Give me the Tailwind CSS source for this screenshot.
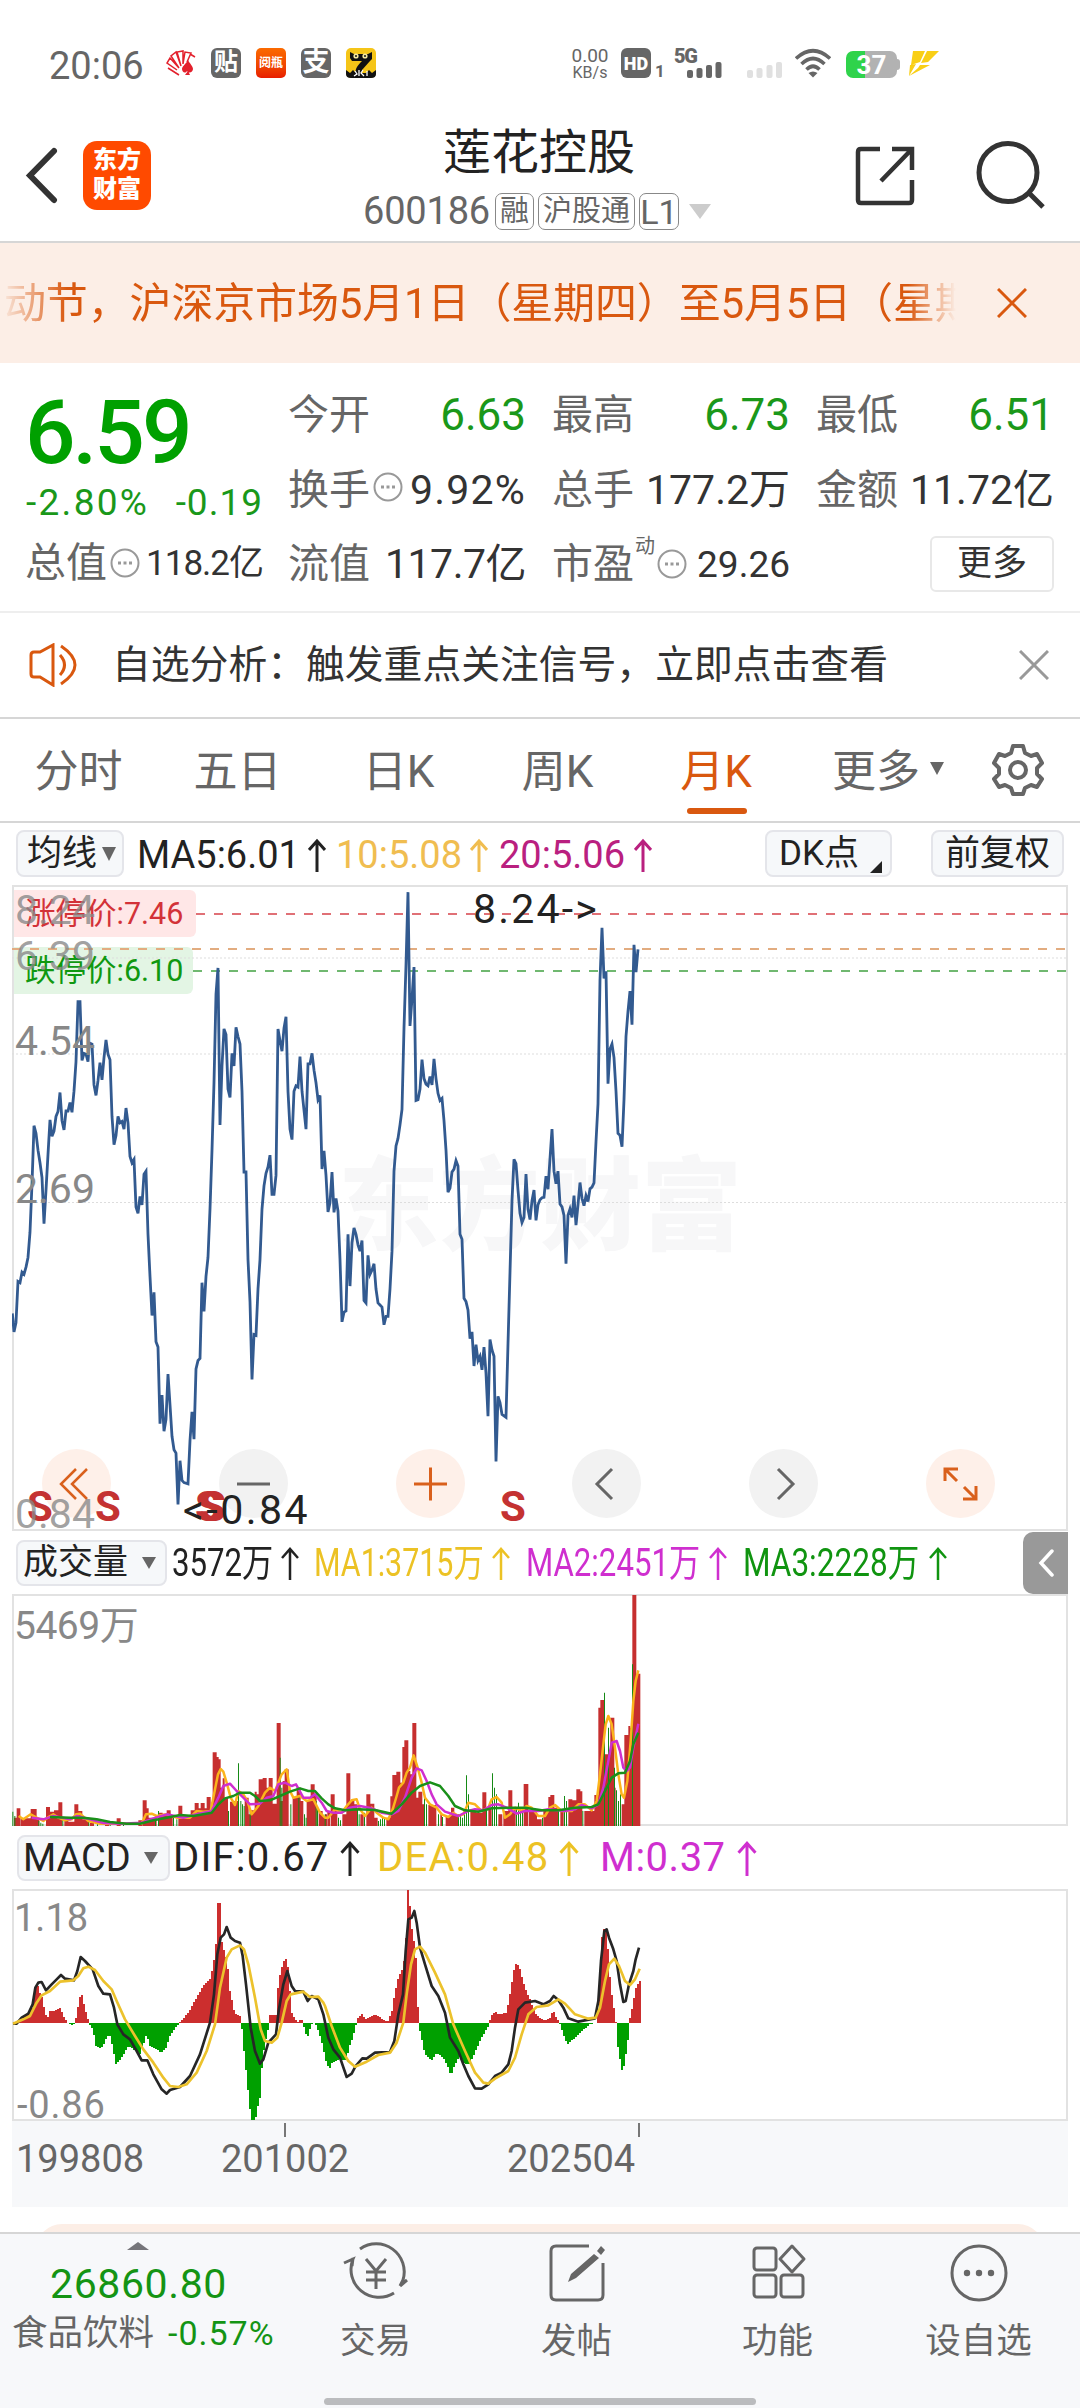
<!DOCTYPE html>
<html lang="zh">
<head>
    <meta charset="UTF-8">
    <title>莲花控股 600186</title>
    <script src="https://cdn.jsdelivr.net/npm/@tailwindcss/browser@4"></script>
</head>
<body class="w-[1080px] h-[2408px] overflow-hidden bg-white text-[#222] font-[Roboto,'Noto_Sans_CJK_SC',sans-serif] whitespace-nowrap leading-none">
    <!-- Status bar -->
    <div class="h-[110px] pt-[48px] pl-[49px] flex items-start text-[#666]">
        <div class="w-[117px] text-[38px] leading-[36px]">20:06</div>
        <div class="flex gap-[15px]">
            <svg class="w-[30px] h-[30px]" viewBox="0 0 30 30" fill="none" stroke="#e3202c" stroke-width="1.5">
                <path d="M13 27L2 20M11 22L1 15l3-5 9 10M13 20L5 8l5-4 5 14M15 18L11 4l6-1v13M17 16l2-12 6 1-4 9M24 6l5 3"/>
                <path d="M22 12c-2 4-6 6-6 9s3 5 5 2c2 3 6 1 6-2s-3-5-5-9zM19 27h5l-2-4z" fill="#e3202c" stroke="none"/>
            </svg>
            <div class="size-[30px] rounded-[6px] bg-[#666] text-white text-[24px] leading-[29px] font-bold text-center">贴</div>
            <div class="size-[30px] rounded-[5px] bg-linear-to-b from-[#fb6a00] to-[#e81c00] text-white text-[12px] leading-[30px] font-bold text-center">阅瓶</div>
            <div class="size-[30px] rounded-[6px] bg-[#666] text-white text-[27px] leading-[29px] font-bold text-center">支</div>
            <svg class="w-[30px] h-[30px]" viewBox="0 0 30 30">
                <rect width="30" height="30" rx="5" fill="#f5c518"/>
                <path d="M4 4l4 2h14l4-2v7l-2 2-8 9v6H9c0-8 3-11 7-15H6l-2-3z" fill="#111"/>
                <path d="M0 22l4 3 3-3 3 3h10l3-3 3 3 4-3v4q0 4-5 4H5q-5 0-5-4z" fill="#111"/>
                <circle cx="10" cy="8" r="2.6" fill="#f6e9a0"/><circle cx="19" cy="8" r="2.6" fill="#f6e9a0"/>
                <circle cx="10" cy="8" r="1" fill="#111"/><circle cx="19" cy="8" r="1" fill="#111"/>
                <path d="M9 23l2 3-3 2M13 22v6M17 22l-2 3 3 3M21 23v5" stroke="#fff" stroke-width="1.3" fill="none"/>
            </svg>
        </div>
        <div class="ml-[194px] w-[40px] text-center">
            <div class="text-[19px] leading-[16px]">0.00</div>
            <div class="text-[16px] leading-[15px] mt-[1px]">KB/s</div>
        </div>
        <div class="ml-[11px] size-[30px] rounded-[6px] bg-[#666] text-white text-[18px] leading-[31px] font-black text-center">HD</div>
        <div class="w-[24px] pl-[4px] pt-[15px] text-[17px] leading-[17px] font-bold">1</div>
        <svg class="w-[48px] h-[30px] overflow-visible" viewBox="0 0 48 30" fill="#666">
            <text x="-1" y="14.5" font-size="20" font-weight="900" textLength="24">5G</text>
            <rect x="12" y="22" width="6" height="8" rx="2"/><rect x="21.500" y="20" width="6" height="10" rx="2"/><rect x="31" y="17" width="6" height="13" rx="2"/><rect x="40.500" y="14" width="6" height="16" rx="2"/>
        </svg>
        <svg class="ml-[24px] w-[36px] h-[30px]" viewBox="0 0 36 30" fill="#e0e0e0">
            <rect x="0" y="22" width="6" height="8" rx="2"/><rect x="9.500" y="20" width="6" height="10" rx="2"/><rect x="19.500" y="17" width="6" height="13" rx="2"/><rect x="29" y="14" width="6" height="16" rx="2"/>
        </svg>
        <svg class="ml-[12px] w-[36px] h-[30px]" viewBox="0 0 36 30" fill="none" stroke="#666" stroke-width="3.600">
            <path d="M1 10.500Q18-5 35 10.500M6.500 16Q18 5 29.500 16M11.500 21.500Q18 15 24.500 21.500"/>
            <path d="M18 29.500l-4.500-4.500q4.500-3 9 0z" fill="#666" stroke="none"/>
        </svg>
        <div class="ml-[15px] mt-[3px] w-[51px] h-[27px] rounded-[7px] bg-linear-to-r from-[#2fd34b] from-37% to-[#b2b2b2] to-37% text-white text-[26px] leading-[28px] font-bold text-center">37</div>
        <div class="mt-[11px] w-[3px] h-[11px] rounded-r bg-[#b2b2b2]"></div>
        <svg class="ml-[8px] mt-[3px] w-[32px] h-[26px]" viewBox="0 0 32 26" fill="#f9cf16">
            <path d="M5 0h12l-5 11-9 3zM19 0h12L20 11l-7 1zM2 14l6-1-7 12zM12 14h10L1 25l9-8z"/>
        </svg>
    </div>

    <!-- Header -->
    <div class="h-[133px] flex border-b-2 border-[#d6d6d6] text-[#333]">
        <svg class="ml-[24px] mt-[36px] w-[36px] h-[58px]" viewBox="0 0 36 58" fill="none" stroke="#333" stroke-width="6" stroke-linecap="round"><path d="M30 5L6 29.500 30 54"/></svg>
        <div class="ml-[23px] mt-[31px] w-[68px] h-[69px] rounded-[14px] bg-[#ff4a00] text-white text-[24px] leading-[29px] font-black text-center pt-[5px]">东方<br>财富</div>
        <div class="ml-[212px] w-[350px] flex flex-col">
            <div class="mt-[17px] ml-[80px] text-[48px] leading-[52px] text-[#222]">莲花控股</div>
            <div class="mt-[13px] flex items-center gap-[4px] text-[#666]">
                <div class="w-[128px] text-[38px] tracking-[-0.200px]">600186</div>
                <div class="h-[37px] px-[4px] border rounded-[7px] border-[#888] text-[29px] leading-[35px]">融</div>
                <div class="h-[37px] px-[4px] border rounded-[7px] border-[#888] text-[29px] leading-[35px]">沪股通</div>
                <div class="w-[40px] h-[37px] border rounded-[7px] border-[#888] text-[34px] leading-[37px] text-center">L1</div>
                <svg class="ml-[6px] w-[22px] h-[15px]" viewBox="0 0 22 15" fill="#ccc"><path d="M0 0h22L11 15z"/></svg>
            </div>
        </div>
        <svg class="ml-[142px] mt-[36px] w-[60px] h-[60px]" viewBox="0 0 60 60" fill="none" stroke="#333" stroke-width="4.500">
            <path d="M25 3H6Q3 3 3 6V54Q3 57 6 57H54Q57 57 57 54V34M37 3H57V24M57 3L26 35"/>
        </svg>
        <svg class="ml-[59px] mt-[28px] w-[72px] h-[74px]" viewBox="0 0 72 74" fill="none" stroke="#333" stroke-width="5">
            <circle cx="34" cy="34.500" r="29"/><path d="M55 55L69 69"/>
        </svg>
    </div>

    <!-- Notice -->
    <div class="h-[120px] flex items-center bg-[#fceee6] text-[#d9580f]">
        <div class="w-[956px] pl-[4px] pt-[2px] overflow-hidden text-[42px] leading-[60px] tracking-[-0.150px] mask-r-from-95% mask-l-from-93%">动节，沪深京市场5月1日（星期四）至5月5日（星期</div>
        <svg class="ml-[41px] w-[30px] h-[30px]" viewBox="0 0 30 30" stroke="#d9580f" stroke-width="3"><path d="M1 1L29 29M29 1L1 29"/></svg>
    </div>

    <!-- Quote -->
    <div class="h-[250px] border-b-2 border-[#eee] pl-[25px] pr-[26px] pt-[26px] text-[41px] text-[#333] flex">
        <div class="w-[238px]">
            <div class="h-[78px] pt-[4px] text-[89px] leading-[80px] font-medium tracking-[-3px] text-[#00a000]">6.59</div>
            <div class="h-[70px] pt-[14px] flex justify-between text-[37px] leading-[44px] text-[#1a981a]"><span class="pl-[1px] tracking-[2.300px]">-2.80%</span><span class="tracking-[1px]">-0.19</span></div>
            <div class="h-[52px] flex items-center text-[35px]">
                <span class="text-[41px] text-[#666]">总值</span>
                <svg class="ml-[3px] w-[30px] h-[30px]" viewBox="0 0 30 30" fill="none" stroke="#999" stroke-width="2"><circle cx="15" cy="15" r="13.500"/><path d="M8 15h3M13.500 15h3M19 15h3" stroke-width="3"/></svg>
                <span class="ml-auto tracking-[-1px]">118.2亿</span>
            </div>
        </div>
        <div class="ml-[25px] w-[238px]">
            <div class="h-[52px] flex items-center justify-between"><span class="text-[#666]">今开</span><span class="text-[44px] text-[#1a981a]">6.63</span></div>
            <div class="mt-[23px] h-[52px] flex items-center text-[41px]"><span class="text-[#666]">换手</span>
                <svg class="ml-[3px] -mt-[6px] w-[30px] h-[30px]" viewBox="0 0 30 30" fill="none" stroke="#999" stroke-width="2"><circle cx="15" cy="15" r="13.500"/><path d="M8 15h3M13.500 15h3M19 15h3" stroke-width="3"/></svg>
                <span class="ml-auto tracking-[1.200px]">9.92%</span></div>
            <div class="mt-[22px] h-[52px] flex items-center justify-between"><span class="text-[#666]">流值</span><span class="tracking-[-0.500px]">117.7亿</span></div>
        </div>
        <div class="ml-[26px] w-[238px]">
            <div class="h-[52px] flex items-center justify-between"><span class="text-[#666]">最高</span><span class="text-[44px] text-[#1a981a]">6.73</span></div>
            <div class="mt-[23px] h-[52px] flex items-center justify-between"><span class="text-[#666]">总手</span><span>177.2万</span></div>
            <div class="mt-[22px] h-[52px] flex items-center"><span class="text-[#666]">市盈</span>
                <span class="-mt-[36px] ml-[1px] text-[20px] text-[#666]">动</span>
                <svg class="ml-[2px] w-[30px] h-[30px]" viewBox="0 0 30 30" fill="none" stroke="#999" stroke-width="2"><circle cx="15" cy="15" r="13.500"/><path d="M8 15h3M13.500 15h3M19 15h3" stroke-width="3"/></svg>
                <span class="ml-auto text-[37px]">29.26</span></div>
        </div>
        <div class="ml-[26px] w-[238px]">
            <div class="h-[52px] flex items-center justify-between"><span class="text-[#666]">最低</span><span class="text-[44px] text-[#1a981a]">6.51</span></div>
            <div class="mt-[23px] h-[52px] flex items-center justify-between"><span class="text-[#666]">金额</span><span>11.72亿</span></div>
            <div class="mt-[20px] ml-auto w-[124px] h-[56px] border-2 border-[#e8e8e8] rounded-[6px] text-[35px] leading-[52px] text-center">更多</div>
        </div>
    </div>

    <!-- Analysis tip -->
    <div class="h-[106px] flex items-center border-b-2 border-[#d6d6d6]">
        <svg class="ml-[29px] w-[52px] h-[44px]" viewBox="0 0 52 44" fill="none" stroke="#d9580f" stroke-width="3">
            <path d="M24 2v40L11 34H5Q2 34 2 31V12Q2 9 5 9h6zM31 12q9 10 0 20M32 3q28 19 0 38"/>
        </svg>
        <div class="ml-[31px] w-[907px] text-[38.800px] leading-[60px] text-[#333]">自选分析：触发重点关注信号，立即点击查看</div>
        <svg class="w-[30px] h-[30px]" viewBox="0 0 30 30" stroke="#999" stroke-width="3"><path d="M1 1L29 29M29 1L1 29"/></svg>
    </div>

    <!-- Period tabs -->
    <div class="h-[104px] flex border-b-2 border-[#d6d6d6] text-[44px] leading-[106px] text-[#666]">
        <div class="w-[157px] text-center">分时</div>
        <div class="w-[161px] text-center">五日</div>
        <div class="w-[161px] text-center">日K</div>
        <div class="w-[157px] text-center">周K</div>
        <div class="w-[160px] text-center text-[#d9580f] relative">月K<div class="absolute left-[51px] bottom-[7px] w-[60px] h-[6px] rounded-full bg-[#d9580f]"></div></div>
        <div class="ml-[36px] w-[98px]">更多</div>
        <svg class="mt-[43px] w-[14px] h-[13px]" viewBox="0 0 14 13" fill="#666"><path d="M0 0h14L7 13z"/></svg>
        <svg class="ml-[48px] mt-[25px] w-[52px] h-[52px]" viewBox="0 0 52 52" fill="none" stroke="#666" stroke-width="4" stroke-linejoin="round">
            <path d="M21 2h10l2 7 6 3 6-2 5 9-5 5v6l5 5-5 8-6-2-6 3-2 6H21l-2-6-6-3-6 2-5-8 5-5v-6l-5-5 5-9 6 2 6-3z"/><circle cx="26" cy="26" r="8"/>
        </svg>
    </div>

    <!-- Moving averages -->
    <div class="h-[62px] flex items-start pt-[7px] pl-[16px] text-[38px] leading-[50px]">
        <div class="w-[108px] h-[47px] mr-[13px] flex items-center gap-[5px] pl-[9px] border-2 border-[#e4e5ea] rounded-[8px] bg-[#f6f8fa] text-[35px]">均线<svg class="w-[14px] h-[14px]" viewBox="0 0 14 14" fill="#666"><path d="M0 0h14L7 14z"/></svg></div>
        <div class="w-[199px] flex items-center">MA5:6.01<svg class="ml-[8px] w-[18px] h-[34px]" viewBox="0 0 18 34" fill="none" stroke="currentColor" stroke-width="3"><path d="M9 34V3M1 12L9 3l8 9"/></svg></div>
        <div class="w-[163px] flex items-center text-[#f0bd50]">10:5.08<svg class="ml-[8px] w-[18px] h-[34px]" viewBox="0 0 18 34" fill="none" stroke="currentColor" stroke-width="3"><path d="M9 34V3M1 12L9 3l8 9"/></svg></div>
        <div class="w-[266px] flex items-center text-[#b9207f]">20:5.06<svg class="ml-[9px] w-[18px] h-[34px]" viewBox="0 0 18 34" fill="none" stroke="currentColor" stroke-width="3"><path d="M9 34V3M1 12L9 3l8 9"/></svg></div>
        <div class="w-[127px] h-[47px] flex items-center pl-[12px] border-2 border-[#e4e5ea] rounded-[8px] bg-[#f6f8fa] text-[35px]">DK点<svg class="ml-[11px] mt-[26px] w-[12px] h-[12px]" viewBox="0 0 12 12"><path d="M12 0v12H0z" fill="#222"/></svg></div>
        <div class="ml-[39px] w-[133px] h-[47px] border-2 border-[#e4e5ea] rounded-[8px] bg-[#f6f8fa] text-[35px] leading-[43px] text-center">前复权</div>
    </div>

    <!-- Price chart -->
    <div class="relative mx-[12px] h-[646px] text-[41px] leading-[40px]">
        <div class="absolute left-[326px] top-[268px] text-[101px] leading-[110px] font-black text-[#f7f7f8]">东方财富</div>
        <div class="absolute left-0 top-[5px] w-[184px] h-[47px] rounded-r-[6px] bg-[#ffe7e7]"></div>
        <div class="absolute left-0 top-[62px] w-[181px] h-[47px] rounded-r-[6px] bg-[#e3f5e4]"></div>
        <svg class="absolute left-0 top-0 w-[1056px] h-[646px]" viewBox="0 0 1056 646" fill="none">
            <rect x="1" y="1" width="1054" height="644" stroke="#e2e2e2" stroke-width="2"/>
            <path d="M0 73H1056M0 169H1056M0 317.500H1056" stroke="#ddd" stroke-dasharray="2 2"/>
            <path d="M184 29H1056" stroke="#e07076" stroke-width="2" stroke-dasharray="9 9"/>
            <path d="M0 64H1056" stroke="#e2ac80" stroke-width="2" stroke-dasharray="9 9"/>
            <path d="M181 86H1056" stroke="#70b870" stroke-width="2" stroke-dasharray="9 9"/>
        </svg>
        <svg class="absolute left-0 top-0 w-[1056px] h-[646px]" viewBox="36 10 3168 1535" preserveAspectRatio="none">
            <polyline id="price" fill="none" stroke="#325a90" stroke-width="2.800" vector-effect="non-scaling-stroke"/>
        </svg>
        <div class="absolute left-[13px] top-[9px] text-[30.500px] text-[#d33238]">涨停价:7.46</div>
        <div class="absolute left-[13px] top-[66px] text-[30.500px] text-[#109810]">跌停价:6.10</div>
        <div class="absolute left-[3px] top-[5px] text-[#888]/80">8.24</div>
        <div class="absolute left-[3px] top-[51px] text-[#888]/80">6.39</div>
        <div class="absolute left-[3px] top-[136px] text-[#888]">4.54</div>
        <div class="absolute left-[3px] top-[284px] text-[#888]">2.69</div>
        <div class="absolute left-[461px] top-[4px] tracking-[2.200px]">8.24-&gt;</div>
        <!-- Chart tools -->
        <div class="absolute left-[30px] top-[564px] flex gap-[107.800px]">
            <svg class="w-[69px] h-[69px]" viewBox="0 0 69 69" fill="none" stroke="#d9601c" stroke-width="2.500"><circle cx="34.500" cy="34.500" r="34.500" fill="#fef0e9" stroke="none"/><path d="M34 20L19 35l15 15M45 20L30 35l15 15"/></svg>
            <svg class="w-[69px] h-[69px]" viewBox="0 0 69 69" fill="none" stroke="#666" stroke-width="3"><circle cx="34.500" cy="34.500" r="34.500" fill="#f2f2f2" stroke="none"/><path d="M18 35h33"/></svg>
            <svg class="w-[69px] h-[69px]" viewBox="0 0 69 69" fill="none" stroke="#d9601c" stroke-width="3"><circle cx="34.500" cy="34.500" r="34.500" fill="#fef0e9" stroke="none"/><path d="M18 35h33M34.500 18.500v33"/></svg>
            <svg class="w-[69px] h-[69px]" viewBox="0 0 69 69" fill="none" stroke="#666" stroke-width="3"><circle cx="34.500" cy="34.500" r="34.500" fill="#f2f2f2" stroke="none"/><path d="M40 20L25 35l15 15"/></svg>
            <svg class="w-[69px] h-[69px]" viewBox="0 0 69 69" fill="none" stroke="#666" stroke-width="3"><circle cx="34.500" cy="34.500" r="34.500" fill="#f2f2f2" stroke="none"/><path d="M29 20L44 35 29 50"/></svg>
            <svg class="w-[69px] h-[69px]" viewBox="0 0 69 69" fill="none" stroke="#d9601c" stroke-width="3"><circle cx="34.500" cy="34.500" r="34.500" fill="#fef0e9" stroke="none"/><path d="M19 32V20h13M19 20l12 12M50 37v13H37M50 50L38 38"/></svg>
        </div>
        <div class="absolute left-[15px] top-[602px] text-[42px] font-bold text-[#c43232]">S</div>
        <div class="absolute left-[83px] top-[602px] text-[42px] font-bold text-[#c43232]">S</div>
        <div class="absolute left-[183px] top-[602px] text-[42px] font-bold text-[#c43232]">S</div>
        <div class="absolute left-[188px] top-[602px] text-[42px] font-bold text-[#c43232]">S</div>
        <div class="absolute left-[488px] top-[602px] text-[42px] font-bold text-[#c43232]">S</div>
        <div class="absolute left-[3px] top-[609px] text-[#888]/80">0.84</div>
        <div class="absolute left-[171px] top-[605px] tracking-[2.500px]">&lt;-0.84</div>
    </div>

    <div class="h-[63px] flex items-start pl-[16px] pt-[9px] text-[38px] leading-[46px]">
        <div class="w-[151px] h-[46px] mr-[5px] flex items-center gap-[14px] pl-[5px] border-2 border-[#e4e5ea] rounded-[8px] bg-[#f6f8fa] text-[35px]">成交量<svg class="w-[14px] h-[12px]" viewBox="0 0 14 12" fill="#666"><path d="M0 0h14L7 12z"/></svg></div>
        <div class="w-[142px] flex items-center"><span class="w-[109px]"><span class="inline-block origin-left scale-x-82">3572万</span></span><svg class="w-[18px] h-[34px]" viewBox="0 0 18 34" fill="none" stroke="currentColor" stroke-width="2.500"><path d="M9 34V3M1 12L9 3l8 9"/></svg></div>
        <div class="w-[212px] flex items-center text-[#ecc224]"><span class="w-[178px]"><span class="inline-block origin-left scale-x-80">MA1:3715万</span></span><svg class="w-[18px] h-[34px]" viewBox="0 0 18 34" fill="none" stroke="currentColor" stroke-width="2.500"><path d="M9 34V3M1 12L9 3l8 9"/></svg></div>
        <div class="w-[217px] flex items-center text-[#cf2fcf]"><span class="w-[183px]"><span class="inline-block origin-left scale-x-82">MA2:2451万</span></span><svg class="w-[18px] h-[34px]" viewBox="0 0 18 34" fill="none" stroke="currentColor" stroke-width="2.500"><path d="M9 34V3M1 12L9 3l8 9"/></svg></div>
        <div class="w-[280px] flex items-center text-[#109410]"><span class="w-[186px]"><span class="inline-block origin-left scale-x-83">MA3:2228万</span></span><svg class="w-[18px] h-[34px]" viewBox="0 0 18 34" fill="none" stroke="currentColor" stroke-width="2.500"><path d="M9 34V3M1 12L9 3l8 9"/></svg></div>
        <div class="-mt-[8px] w-[45px] h-[62px] rounded-l-[10px] bg-[#999] flex items-center justify-center"><svg class="w-[16px] h-[28px]" viewBox="0 0 16 28" fill="none" stroke="#fff" stroke-width="3.500" stroke-linecap="round"><path d="M14 2L3 14l11 12"/></svg></div>
    </div>
    <div class="relative mx-[12px] h-[232px] border-2 border-[#e2e2e2] text-[39px] leading-[40px] text-[#888]">
        <div class="absolute left-0 top-[10px] tracking-[-0.500px]">5469万</div>
        <svg class="absolute -left-[2px] -top-[1px] w-[1056px] h-[231px]" viewBox="6 -18 3168 693" fill="none" stroke-width="7.500" stroke-linejoin="round">
            <path id="vol-up" fill="#c62f2f"/>
            <path id="vol-down" fill="#168a16"/>
            <polyline id="vol-ma1" stroke="#fbb41c"/>
            <polyline id="vol-ma2" stroke="#cf2fcf"/>
            <polyline id="vol-ma3" stroke="#1a901a"/>
        </svg>
    </div>

    <!-- MACD -->
    <div class="h-[63px] flex items-start pl-[17px] pt-[9px] text-[40px] leading-[46px]">
        <div class="w-[153px] h-[46px] mr-[3px] flex items-center gap-[13px] pl-[4px] border-2 border-[#e4e5ea] rounded-[8px] bg-[#f6f8fa] text-[38px]">MACD<svg class="w-[14px] h-[12px]" viewBox="0 0 14 12" fill="#666"><path d="M0 0h14L7 12z"/></svg></div>
        <div class="w-[204px] flex items-center tracking-[1.200px]">DIF:0.67<svg class="ml-[10px] w-[20px] h-[36px]" viewBox="0 0 18 34" fill="none" stroke="currentColor" stroke-width="2.800"><path d="M9 34V3M1 12L9 3l8 9"/></svg></div>
        <div class="w-[223px] flex items-center tracking-[1.200px] text-[#ecc224]">DEA:0.48<svg class="ml-[10px] w-[20px] h-[36px]" viewBox="0 0 18 34" fill="none" stroke="currentColor" stroke-width="2.800"><path d="M9 34V3M1 12L9 3l8 9"/></svg></div>
        <div class="flex items-center tracking-[0.500px] text-[#cf2fcf]">M:0.37<svg class="ml-[11px] w-[20px] h-[36px]" viewBox="0 0 18 34" fill="none" stroke="currentColor" stroke-width="2.800"><path d="M9 34V3M1 12L9 3l8 9"/></svg></div>
    </div>
    <div class="relative mx-[12px] h-[232px] border-2 border-[#e2e2e2] text-[38px] leading-[40px] text-[#888]">
        <div class="absolute left-0 top-[7px]">1.18</div>
        <div class="absolute left-[3px] top-[194px] tracking-[0.800px]">-0.86</div>
        <svg class="absolute -left-[2px] -top-[1px] w-[1056px] h-[231px]" viewBox="6 867 3168 693" fill="none" stroke-width="8" stroke-linejoin="round">
            <path id="macd-up" fill="#cc2e2e" shape-rendering="crispEdges"/>
            <path id="macd-down" fill="#00a000" shape-rendering="crispEdges"/>
            <polyline id="dif" stroke="#262626"/>
            <polyline id="dea" stroke="#ecc22c"/>
        </svg>
    </div>

    <!-- Time axis -->
    <div class="relative mx-[12px] h-[86px] bg-[#f7f8fa] text-[38px] leading-[40px] text-[#666] flex items-start pt-[18px]">
        <div class="absolute left-[272px] top-[2px] w-[2px] h-[14px] bg-[#777]"></div>
        <div class="absolute left-[626px] top-[2px] w-[2px] h-[14px] bg-[#777]"></div>
        <div class="w-[205px] pl-[4px]">199808</div>
        <div class="w-[286px] pl-[4px]">201002</div>
        <div class="pl-[4px]">202504</div>
    </div>
    <div class="h-[25px] pt-[17px] px-[36px] overflow-hidden"><div class="h-[60px] rounded-[26px] bg-[#fceee6]"></div></div>

    <!-- Bottom bar -->
    <div class="relative h-[176px] border-t-2 border-[#d6d6d6] bg-[#f7f8fa] flex text-[35.500px] text-[#666]">
        <div class="w-[275px] pt-[8px]">
            <svg class="ml-[127px] w-[22px] h-[8px]" viewBox="0 0 22 8" fill="#75757a"><path d="M0 8L11 0l11 8z"/></svg>
            <div class="mt-[12px] w-[277px] text-center text-[41px] leading-[44px] tracking-[0.600px] text-[#149414]">26860.80</div>
            <div class="mt-[2px] pl-[12px] flex items-center text-[35.500px] leading-[50px]">食品饮料<span class="ml-[14px] text-[34px] tracking-[1px] text-[#149414]">-0.57%</span></div>
        </div>
        <div class="w-[201px] flex flex-col items-center pt-[8px]">
            <svg class="w-[66px] h-[60px]" viewBox="0 0 66 60" fill="none" stroke="#666" stroke-width="3">
                <path d="M17 7A28 28 0 0 1 60 38L57 44M51 51A28 28 0 0 1 10 17L1 21M10 16l-1 8M57 44l7-6"/>
                <path d="M23 17l10 12 10-12M33 29v18M23 30h20M23 38h20"/>
            </svg>
            <div class="mt-[22px]">交易</div>
        </div>
        <div class="w-[201px] flex flex-col items-center pt-[8px]">
            <svg class="w-[60px] h-[60px]" viewBox="0 0 60 60" fill="none" stroke="#666" stroke-width="3">
                <path d="M42 4H9Q4 4 4 9v44q0 5 5 5h42q5 0 5-5V21"/><path d="M21 40l3-8 23-20 5 4-23 20zM50 9l4-5 4 4-4 5z" fill="#666" stroke="none"/>
            </svg>
            <div class="mt-[22px]">发帖</div>
        </div>
        <div class="w-[201px] flex flex-col items-center pt-[8px]">
            <svg class="w-[60px] h-[60px]" viewBox="0 0 60 60" fill="none" stroke="#666" stroke-width="3">
                <rect x="6" y="6" width="22" height="22" rx="3"/><rect x="6" y="33" width="22" height="22" rx="3"/><rect x="33" y="33" width="22" height="22" rx="3"/><path d="M44 4l12 13-12 13-12-13z" stroke-linejoin="round"/>
            </svg>
            <div class="mt-[22px]">功能</div>
        </div>
        <div class="w-[201px] flex flex-col items-center pt-[8px]">
            <svg class="w-[60px] h-[60px]" viewBox="0 0 60 60" fill="none" stroke="#666" stroke-width="3">
                <circle cx="30" cy="31" r="27"/><g fill="#666" stroke="none"><circle cx="18" cy="31" r="3.200"/><circle cx="30" cy="31" r="3.200"/><circle cx="42" cy="31" r="3.200"/></g>
            </svg>
            <div class="mt-[22px]">设自选</div>
        </div>
        <div class="absolute left-[324px] bottom-[3px] w-[432px] h-[7px] rounded-full bg-[#bbbcbe]"></div>
    </div>

    <script>
        // Each series is kept in two halves; the second half is shifted right by `dx`.
        function parse(text) {
            return text.trim().split(/\s+/).map(p => p.split(',').map(Number));
        }

        function join(first, second, dx) {
            return parse(first).concat(parse(second).map(p => [p[0] + dx, ...p.slice(1)]));
        }

        function drawLine(id, points) {
            document.getElementById(id).setAttribute('points', points.map(p => p.join(',')).join(' '));
        }

        function valueAt(points, x) {
            for (let i = 1; i < points.length; i++) {
                const [x0, y0] = points[i - 1];
                const [x1, y1] = points[i];
                if (x <= x1) return y0 + (y1 - y0) * (x - x0) / (x1 - x0);
            }
            return points[points.length - 1][1];
        }

        // Price
        drawLine('price', join(
            `37,1028 42,1072 48,1050 54,952 60,955 66,930 72,935 78,918 84,895 90,835 96,720 102,582 108,600 114,640 120,670 126,705 132,815 138,735 144,650 150,568 156,607 162,595 168,560 174,548 180,503 186,570 192,592 198,547 204,547 210,527 216,550 222,500 228,430 234,287 240,287 246,427 252,410 258,412 264,430 268,385 276,388 282,485 288,510 294,475 300,432 306,473 312,420 318,378 324,412 330,425 336,560 342,627 348,605 354,560 360,575 366,572 372,590 378,540 384,575 390,655 396,670 402,662 408,775 414,790 420,750 426,770 432,697 438,690 444,840 450,940 456,1033 462,978 468,1095 474,1108 480,1290 486,1222 492,1308 498,1280 504,1172 510,1245 516,1320 522,1352 528,1360 534,1482 540,1378 546,1425 552,1430 564,1433 570,1330 576,1262 582,1327 588,1160 594,1140 600,1135 606,955 612,1023 618,940 624,895 630,780 636,640 642,480 648,270 654,207 660,580 666,440 672,352 678,365 684,495 690,515 696,410 702,440 708,348 714,370 720,388 726,500 732,692 738,692 744,900 750,1000 756,1185 762,1078 768,1080 774,970 780,900 786,780 792,725 798,695 804,680 810,652 816,745 822,745 828,700 834,352 840,380 846,405 852,350 858,323 864,500 870,590 876,615 882,500 888,487 894,490 900,418 906,500 912,545 918,590 924,435 930,435 936,410 942,450 948,480 954,520 960,510 966,685 972,642 978,700 984,787`,
            `0,765 6,692 12,788 18,755 24,785 30,900 36,1048 42,1025 48,1022 54,840 60,963 66,860 72,825 78,840 84,865 90,880 96,855 102,997 108,1003 114,890 120,935 126,925 132,910 138,970 144,1003 150,1008 156,1013 162,1055 168,1035 174,1035 180,970 186,880 192,690 198,630 204,612 210,580 216,543 222,350 228,200 234,27 240,345 246,280 252,205 258,522 264,520 270,495 276,425 282,470 288,483 294,487 300,465 306,485 312,423 318,470 324,505 330,522 336,517 342,570 348,640 354,740 360,730 366,692 372,685 378,665 384,678 390,840 396,852 402,992 408,1000 414,1020 420,1088 426,1072 432,1153 438,1102 444,1140 450,1130 456,1162 462,1108 468,1170 474,1272 480,1090 486,1115 492,1130 498,1380 504,1225 510,1240 516,1268 528,1275 534,1100 540,930 546,760 552,662 558,672 564,735 570,790 576,812 582,800 588,697 594,780 600,805 606,760 612,735 618,807 624,770 630,758 636,753 642,752 648,702 654,733 660,660 666,590 672,690 678,720 684,690 690,768 696,775 702,795 708,910 714,795 720,780 726,800 732,748 738,818 744,770 750,717 756,755 762,772 768,748 774,762 780,732 786,728 792,718 798,620 804,530 810,235 816,112 822,232 828,215 834,482 840,400 846,388 852,420 858,500 864,600 870,605 876,632 882,520 888,370 894,310 900,262 906,342 912,152 918,217 924,163`, 990));

        // Volume, rising months: x, width, top
        const rising = join(
            `12,8,650 20,11,622 32,30,652 62,18,624 80,8,655 108,12,618 120,12,632 132,13,628 145,12,604 163,12,660 175,18,662 193,12,610 205,12,630 217,20,655 240,12,665 285,12,665 320,12,652 385,12,658 398,12,598 410,6,622 416,24,650 446,12,635 458,12,638 470,12,628 482,6,645 505,12,614 517,25,645 542,12,628 554,12,606 566,6,622 572,12,606 584,6,622 590,12,588 602,6,620 608,12,454 620,6,468 626,6,475 632,6,560 638,6,532 644,10,590 660,12,602 672,12,600 704,12,590 716,6,640 722,12,628 734,6,572 740,6,580 746,12,535 758,12,531 770,6,560 776,12,531 788,12,608 800,12,366 812,6,600 818,6,540 824,12,505 848,12,590 860,12,560 872,8,600 890,12,600 902,12,550 914,6,580 926,12,630 938,8,645 952,8,630`,
            `0,6,640 17,12,580 29,8,625 52,12,640 64,12,517 76,12,600 88,8,610 106,10,640 124,12,580 136,12,608 148,10,650 184,12,650 196,6,586 202,12,522 214,12,512 226,6,545 232,6,438 238,12,418 250,6,510 256,6,520 262,12,366 274,6,590 280,12,572 292,6,610 310,24,612 346,5,640 362,16,645 378,10,620 388,12,640 436,18,630 454,18,635 472,12,574 490,10,620 520,12,640 535,15,630 550,12,568 562,10,620 596,14,549 612,24,630 636,14,655 655,15,630 670,6,588 676,12,582 688,12,620 706,10,630 730,12,595 742,12,598 754,12,565 766,6,571 778,30,630 808,12,582 820,6,320 826,12,297 838,18,460 856,12,350 868,4,560 890,8,610 898,12,402 910,6,375 916,6,380 922,12,-18 934,12,218`, 945);
        document.getElementById('vol-up').setAttribute('d', rising.map(([x, w, top]) => `M${x} 675V${top}h${w}V675z`).join(''));

        // Volume, falling months: x, top
        const falling = join(
            `8,632 14,645 86,660 92,665 98,668 158,650 236,660 262,668 300,668 340,668 436,645 445,630 490,650 500,655 655,630 685,487 692,600 697,610 702,615 720,630 810,470 815,560 842,610 866,590 883,640 888,650 918,600 922,620 945,640`,
            `40,650 46,658 97,625 102,640 118,635 160,660 166,655 172,650 178,652 298,590 304,610 340,640 352,648 400,640 406,645 412,650 418,640 424,523 430,580 484,620 502,517 508,560 514,580 574,620 580,605 586,625 592,630 652,650 700,630 718,585 724,600 773,630 838,275 850,380 868,500 874,568 880,600 886,580 922,190`, 945);
        document.getElementById('vol-down').setAttribute('d', falling.map(([x, top]) => `M${x - 1} 675V${top}h3V675z`).join(''));

        drawLine('vol-ma1', join(
            `26,645 40,655 62,640 80,650 100,660 115,648 130,640 145,650 165,658 185,655 198,640 210,638 235,660 270,668 350,668 395,668 408,640 425,638 440,645 470,640 500,650 520,650 540,650 560,630 580,632 602,630 614,570 624,520 632,504 640,512 650,545 662,590 675,612 685,570 700,580 712,600 725,640 745,615 765,575 780,560 795,570 805,545 815,520 830,505 840,570 850,590 870,585 890,600 910,595 930,635 945,650`,
            `10,650 30,625 50,635 65,615 80,598 95,595 105,625 120,645 140,620 155,635 175,650 190,655 203,625 215,585 222,560 235,545 245,515 255,500 266,463 278,500 290,545 300,590 315,610 335,620 350,640 370,648 385,635 400,645 415,640 430,605 450,610 470,630 490,620 500,595 515,588 530,605 540,650 555,640 570,620 590,630 605,615 620,620 640,645 660,645 675,620 690,612 710,630 740,630 760,610 780,610 800,628 815,600 825,520 835,430 842,370 850,345 860,370 870,440 880,520 890,580 897,590 907,540 917,420 925,300 932,240 940,208`, 945));
        drawLine('vol-ma2', join(
            `65,650 100,655 130,645 180,655 200,645 240,655 280,666 330,668 395,665 430,652 470,640 520,650 560,640 605,630 625,590 640,555 660,548 680,570 700,590 720,610 750,608 770,590 790,585 805,550 825,545 845,555 858,550 880,590 900,590 915,580 935,605 950,630`,
            `25,635 50,635 75,620 105,615 140,622 170,635 200,640 220,630 240,590 260,530 275,502 290,508 305,540 320,580 335,610 360,632 400,645 430,630 450,625 475,628 500,612 520,610 545,620 575,638 600,630 640,630 670,625 720,630 750,625 770,612 800,622 820,610 835,560 850,480 860,425 875,420 885,450 895,500 905,510 915,500 925,440 940,368`, 945));
        drawLine('vol-ma3', join(
            `120,648 180,650 220,650 260,655 300,663 350,668 390,668 430,658 470,650 510,642 550,645 605,635 625,610 645,592 670,585 690,575 720,575 735,585 750,600 780,598 810,585 840,572 870,562 895,570 915,570 935,592 955,610`,
            `30,622 60,628 100,625 150,627 200,638 230,610 260,575 285,555 315,544 345,555 370,585 390,615 420,628 460,632 500,622 550,620 600,620 650,628 700,628 750,620 800,618 820,610 840,570 860,530 880,517 900,515 915,480 925,430 940,395`, 945));

        // MACD histogram, one bar per month around the zero line
        const ZERO = 1267;
        const histogram = join(
            `9,1267 20,1264 40,1245 55,1235 66,1220 72,1190 78,1158 86,1155 92,1185 98,1190 104,1230 112,1252 120,1230 140,1228 152,1218 158,1240 170,1262 178,1267 190,1274 196,1262 202,1225 208,1200 213,1167 220,1200 230,1240 238,1267 250,1290 258,1335 268,1342 280,1335 292,1305 302,1305 308,1340 318,1390 335,1370 355,1335 370,1345 390,1358 402,1325 410,1300 420,1335 440,1345 454,1355 468,1340 480,1305 500,1275 512,1262 535,1235 560,1190 580,1155 600,1135 608,1100 617,1050 621,970 624,905 630,905 631,1000 640,1040 652,1080 660,1170 674,1235 690,1245 696,1285 702,1350 710,1425 716,1490 724,1558 736,1558 742,1525 750,1490 756,1400 764,1330 772,1300 777,1267 780,1243 798,1243 804,1160 812,1110 822,1080 832,1072 838,1150 846,1235 860,1262 868,1262 874,1250 878,1264 886,1290 891,1315 898,1290 906,1270 914,1264 922,1280 935,1320 945,1365`,
            `6,1392 15,1400 22,1385 45,1375 65,1378 72,1340 82,1315 92,1275 97,1253 112,1238 120,1255 150,1240 170,1252 188,1262 200,1235 208,1185 220,1130 235,1100 240,1050 246,970 248,867 254,867 256,960 266,1010 274,1080 280,1245 285,1290 300,1360 320,1378 335,1355 355,1370 368,1395 378,1424 390,1390 405,1365 420,1390 435,1388 450,1355 470,1310 490,1275 498,1245 510,1232 520,1240 545,1235 555,1180 566,1110 575,1082 585,1105 600,1160 615,1195 630,1235 650,1255 665,1258 677,1250 684,1228 692,1245 705,1268 715,1300 727,1330 745,1315 770,1290 795,1270 815,1265 822,1200 832,985 846,985 852,1100 862,1190 872,1250 880,1350 888,1390 893,1418 900,1380 910,1310 916,1240 925,1210 930,1165 944,1140`, 945);
        let up = '', down = '';
        for (let x = 9; x < 1890; x += 6) {
            const y = valueAt(histogram, x + 3);
            const bar = `M${x} ${ZERO}V${y}h6V${ZERO}z`;
            if (y < ZERO) up += bar; else down += bar;
        }
        document.getElementById('macd-up').setAttribute('d', up);
        document.getElementById('macd-down').setAttribute('d', down);

        drawLine('dif', join(
            `9,1268 20,1268 35,1250 55,1238 68,1210 76,1160 85,1145 95,1143 108,1168 125,1150 140,1135 153,1122 165,1133 192,1138 202,1110 212,1068 225,1080 248,1105 265,1155 280,1178 300,1180 312,1220 322,1270 340,1300 360,1315 380,1350 395,1378 412,1378 430,1420 455,1465 470,1478 480,1467 510,1458 540,1425 570,1360 600,1265 612,1180 622,1060 632,1010 642,1000 650,978 662,1010 675,1020 690,1025 698,1065 708,1150 722,1280 735,1350 750,1388 760,1375 775,1325 798,1300 806,1230 820,1150 832,1110 845,1155 855,1170 880,1172 893,1200 905,1185 925,1195 940,1240 955,1310`,
            `25,1345 45,1370 65,1428 80,1418 92,1395 112,1372 125,1373 150,1355 195,1353 208,1320 220,1240 234,1180 242,1050 250,955 260,950 268,930 275,965 285,1040 300,1090 320,1155 340,1185 360,1235 375,1310 400,1350 415,1390 430,1425 450,1462 470,1463 490,1450 510,1425 530,1415 550,1390 560,1350 570,1280 580,1225 600,1205 630,1200 655,1210 675,1200 686,1185 700,1197 715,1220 730,1252 760,1262 810,1252 820,1200 828,1080 838,990 845,985 852,1010 865,1045 875,1080 885,1150 895,1203 902,1200 912,1150 925,1110 932,1075 942,1040`, 945));
        drawLine('dea', join(
            `9,1268 40,1255 60,1245 80,1205 95,1183 120,1170 150,1142 190,1138 205,1125 220,1102 235,1097 255,1107 280,1140 305,1165 320,1200 345,1255 375,1305 400,1345 430,1385 460,1430 480,1455 505,1458 530,1450 560,1415 590,1350 615,1270 630,1160 650,1070 665,1045 690,1033 702,1045 715,1090 735,1190 752,1285 765,1320 785,1325 802,1310 815,1265 830,1200 842,1180 880,1172 900,1188 925,1187 940,1205`,
            `0,1215 20,1275 45,1340 70,1380 90,1397 125,1382 160,1362 195,1355 215,1325 235,1265 245,1180 258,1090 270,1045 285,1037 300,1055 330,1115 360,1180 385,1270 420,1350 450,1415 475,1445 490,1448 510,1433 550,1410 570,1370 590,1300 610,1240 635,1218 670,1213 700,1195 720,1208 750,1240 790,1253 812,1250 825,1220 840,1140 852,1090 868,1073 882,1095 900,1140 915,1152 930,1135 944,1103`, 945));
    </script>
</body>
</html>
